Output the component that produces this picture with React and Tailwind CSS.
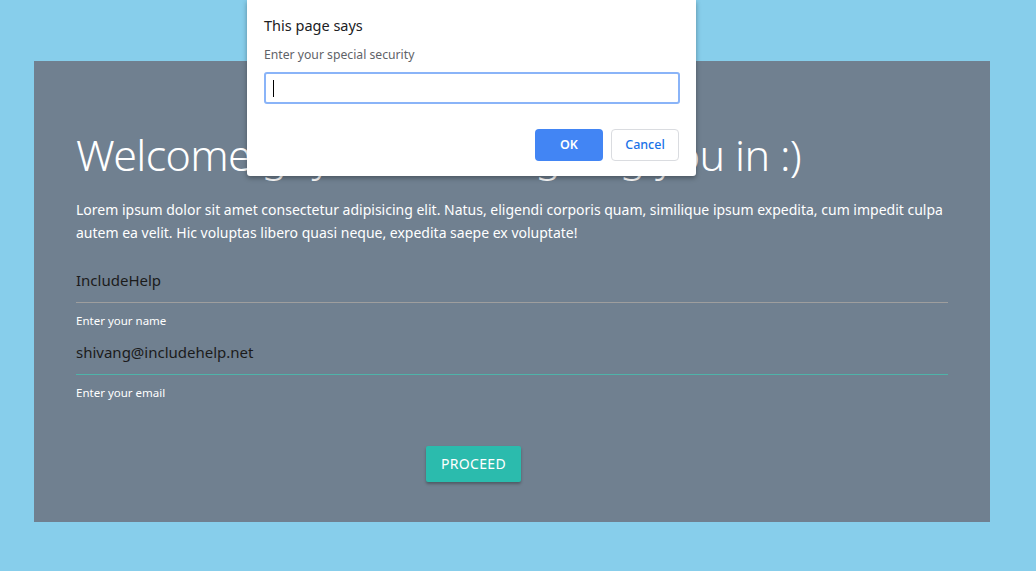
export default function App() {
  const font = { fontFamily: '"Noto Sans", "Open Sans", sans-serif' };
  return (
    <div className="relative min-h-[571px] w-full bg-[#87ceeb] pt-[61px] pb-[49px]" style={font}>
      {/* main panel */}
      <div className="ml-[34px] w-[956px] h-[461px] bg-[#708090] px-[42px] pt-[64px]">
        <h1 className="text-[43px] leading-[60px] text-white font-light tracking-[-0.65px] whitespace-nowrap">
          Welcome guys, we are signing you in :)
        </h1>
        <p className="mt-[14px] text-[14px] leading-[22.5px] text-white">
          Lorem ipsum dolor sit amet consectetur adipisicing elit. Natus, eligendi corporis quam, similique ipsum expedita, cum impedit culpa autem ea velit. Hic voluptas libero quasi neque, expedita saepe ex voluptate!
        </p>

        <div className="mt-[14px]">
          <div className="h-[45px] border-b border-[#9e9e9e] flex items-center text-[15px] text-[#1b1b1b]">
            IncludeHelp
          </div>
          <div className="mt-[9px] text-[11.5px] text-white">Enter your name</div>
        </div>

        <div className="mt-[1px]">
          <div className="h-[45px] border-b border-[#4fb3a9] flex items-center text-[15px] text-[#1b1b1b]">
            shivang@includehelp.net
          </div>
          <div className="mt-[9px] text-[11.5px] text-white">Enter your email</div>
        </div>

        <div className="mt-[44px] flex">
          <button className="ml-[350px] w-[95px] h-[36px] rounded-[2px] bg-[#2bbbad] text-white text-[14px] uppercase tracking-[0.3px] shadow-[0_2px_3px_rgba(0,0,0,0.3)]">
            Proceed
          </button>
        </div>
      </div>

      {/* browser prompt dialog */}
      <div className="absolute left-[247px] top-0 w-[449px] h-[176px] bg-white rounded-b-[3px] shadow-[0_2px_5px_rgba(0,0,0,0.35)] px-[17px] pt-[15px]">
        <div className="text-[14.5px] leading-[20px] text-[#202124]">This page says</div>
        <div className="mt-[12px] text-[12.2px] leading-[16px] text-[#5f6368]">Enter your special security</div>
        <div className="mt-[9px] h-[32px] w-[416px] rounded-[3px] border-2 border-[#8ab4f8] flex items-center pl-[7px]">
          <div className="w-px h-[17px] bg-black"></div>
        </div>
        <div className="mt-[25px] flex justify-end gap-[8px]">
          <button className="w-[68px] h-[32px] rounded-[4px] bg-[#4285f4] text-white text-[12.5px] font-semibold">
            OK
          </button>
          <button className="w-[68px] h-[32px] rounded-[4px] border border-[#dadce0] bg-white text-[#1a73e8] text-[12.5px] font-medium">
            Cancel
          </button>
        </div>
      </div>
    </div>
  );
}
